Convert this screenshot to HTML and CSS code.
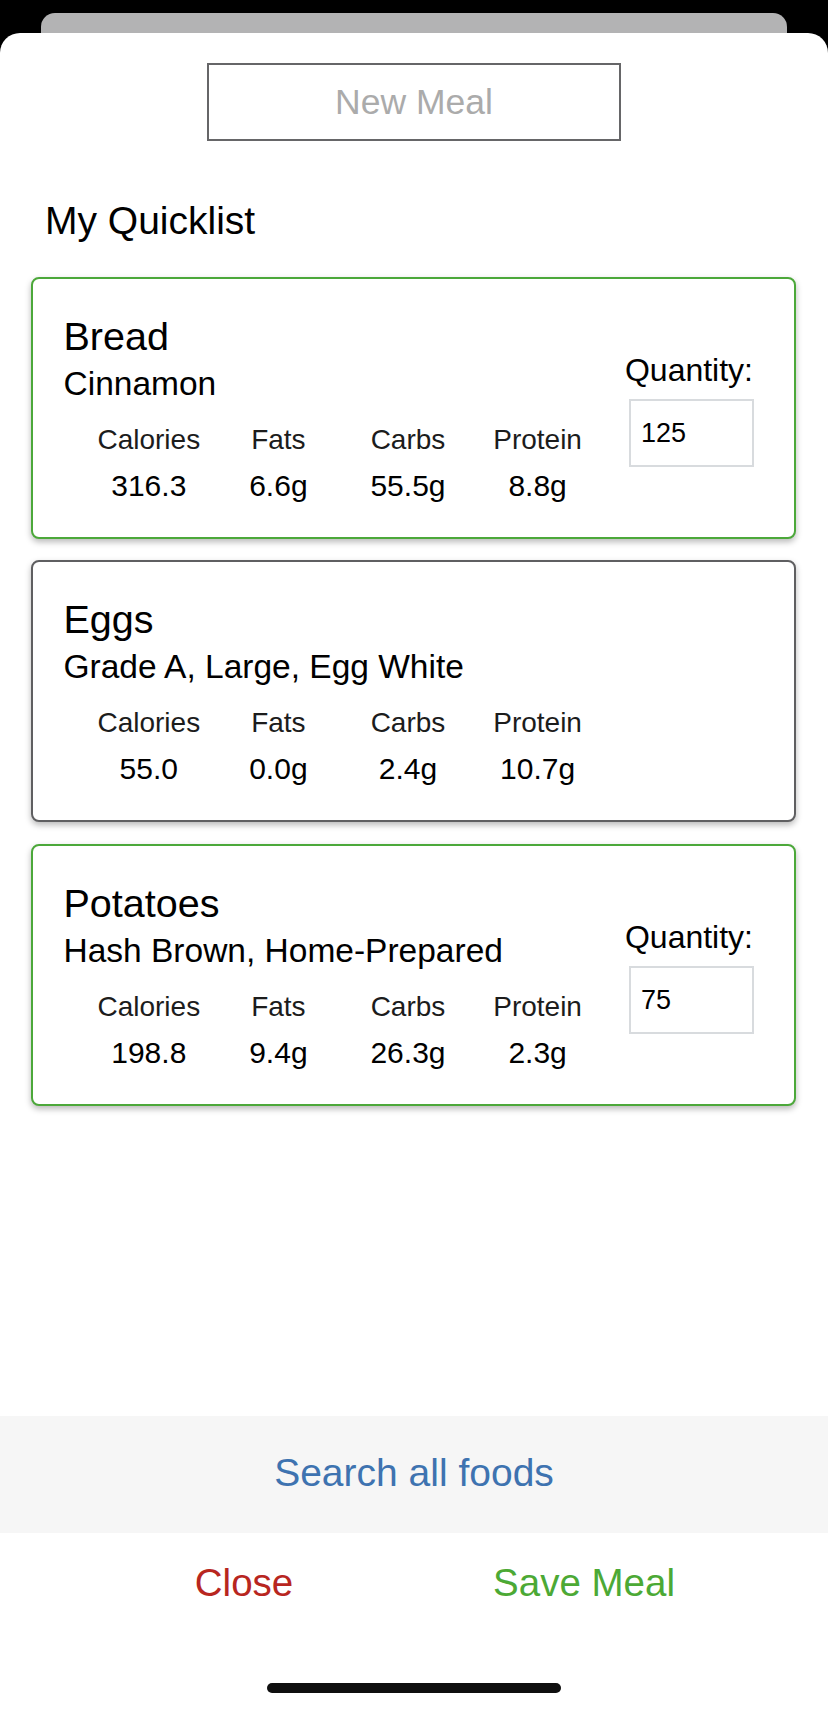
FILE: index.html
```html
<!DOCTYPE html>
<html>
<head>
<meta charset="utf-8">
<link rel="stylesheet" href="styles.css">
</head>
<body>
<div class="screen">
  <div class="back-card"></div>
  <div class="sheet">
    <div class="title-wrap"><div class="title-input">New Meal</div></div>
    <h2 class="section">My Quicklist</h2>
    <div class="list">
      <div class="card card-selected">
        <div class="info">
          <div class="name">Bread</div>
          <div class="sub">Cinnamon</div>
          <div class="macros">
            <span class="lbl">Calories</span><span class="lbl">Fats</span><span class="lbl">Carbs</span><span class="lbl">Protein</span>
            <span class="val">316.3</span><span class="val">6.6g</span><span class="val">55.5g</span><span class="val">8.8g</span>
          </div>
        </div>
        <div class="qty">
          <div class="qty-label">Quantity:</div>
          <div class="qty-box">125</div>
        </div>
      </div>
      <div class="card">
        <div class="info">
          <div class="name">Eggs</div>
          <div class="sub">Grade A, Large, Egg White</div>
          <div class="macros">
            <span class="lbl">Calories</span><span class="lbl">Fats</span><span class="lbl">Carbs</span><span class="lbl">Protein</span>
            <span class="val">55.0</span><span class="val">0.0g</span><span class="val">2.4g</span><span class="val">10.7g</span>
          </div>
        </div>
      </div>
      <div class="card card-selected">
        <div class="info">
          <div class="name">Potatoes</div>
          <div class="sub">Hash Brown, Home-Prepared</div>
          <div class="macros">
            <span class="lbl">Calories</span><span class="lbl">Fats</span><span class="lbl">Carbs</span><span class="lbl">Protein</span>
            <span class="val">198.8</span><span class="val">9.4g</span><span class="val">26.3g</span><span class="val">2.3g</span>
          </div>
        </div>
        <div class="qty">
          <div class="qty-label">Quantity:</div>
          <div class="qty-box">75</div>
        </div>
      </div>
    </div>
    <div class="spacer"></div>
    <div class="search">Search all foods</div>
    <div class="actions">
      <div class="action close">Close</div>
      <div class="action save">Save Meal</div>
    </div>
    <div class="home-area"><div class="home-bar"></div></div>
  </div>
</div>
</body>
</html>
```
FILE: styles.css
```css
* { box-sizing: border-box; }
html, body {
  margin: 0;
  padding: 0;
  background: #000;
}
body {
  font-family: "Liberation Sans", Arial, sans-serif;
  color: #000;
}
.screen {
  width: 828px;
  height: 1709px;
  padding-top: 13px;
  display: flex;
  flex-direction: column;
  overflow: hidden;
}
.back-card {
  height: 20px;
  margin: 0 41px;
  background: #b3b3b4;
  border-radius: 14px 14px 0 0;
  flex: none;
}
.sheet {
  flex: 1;
  background: #fff;
  border-radius: 20px 20px 0 0;
  display: flex;
  flex-direction: column;
}
.title-wrap {
  display: flex;
  justify-content: center;
  padding-top: 30px;
}
.title-input {
  width: 414px;
  height: 78px;
  border: 2px solid #666668;
  display: flex;
  align-items: center;
  justify-content: center;
  font-size: 35.5px;
  color: #ababab;
}
.section {
  margin: 57.6px 0 0;
  padding-left: 45px;
  font-size: 39px;
  line-height: 44px;
  font-weight: normal;
  color: #000;
}
.list {
  margin: 34.4px 32px 0 30.5px;
  display: flex;
  flex-direction: column;
  gap: 21.5px;
}
.card {
  height: 262px;
  border: 2px solid #5f5f61;
  border-radius: 8px;
  background: #fff;
  box-shadow: 0 3px 6px rgba(0, 0, 0, 0.28);
  padding: 34px 36px 33px 31px;
  display: flex;
  justify-content: space-between;
}
.card-selected {
  border-color: #4ca83a;
}
.info {
  display: flex;
  flex-direction: column;
}
.name {
  font-size: 39.5px;
  line-height: 46px;
}
.sub {
  margin-top: 6px;
  font-size: 33.5px;
  line-height: 38px;
}
.macros {
  margin-top: 20px;
  padding-left: 20.5px;
  display: grid;
  grid-template-columns: repeat(4, 129.6px);
  row-gap: 11px;
  text-align: center;
}
.lbl {
  font-size: 28px;
  line-height: 34px;
  color: #1c1c1c;
}
.val {
  font-size: 30px;
  line-height: 36px;
}
.qty {
  align-self: center;
  display: flex;
  flex-direction: column;
  align-items: center;
  margin-top: 2px;
}
.qty-label {
  font-size: 32px;
  line-height: 36px;
  margin-right: 5px;
}
.qty-box {
  margin-top: 11.6px;
  width: 125px;
  height: 68px;
  border: 2px solid #d8dbde;
  display: flex;
  align-items: center;
  padding-left: 10px;
  font-size: 27px;
  color: #000;
}
.spacer {
  flex: 1;
}
.search {
  height: 117px;
  padding-bottom: 3px;
  background: #f6f6f6;
  display: flex;
  align-items: center;
  justify-content: center;
  font-size: 39px;
  color: #3e73b0;
}
.actions {
  height: 100px;
  padding: 0 74px;
  display: flex;
  align-items: center;
}
.action {
  flex: 1;
  text-align: center;
  font-size: 38.5px;
  line-height: 46px;
}
.close { color: #b8261f; }
.save { color: #4ca935; }
.home-area {
  height: 76px;
  padding-top: 50px;
  display: flex;
  justify-content: center;
}
.home-bar {
  width: 294px;
  height: 10px;
  border-radius: 5px;
  background: #0f0f0f;
}
```
